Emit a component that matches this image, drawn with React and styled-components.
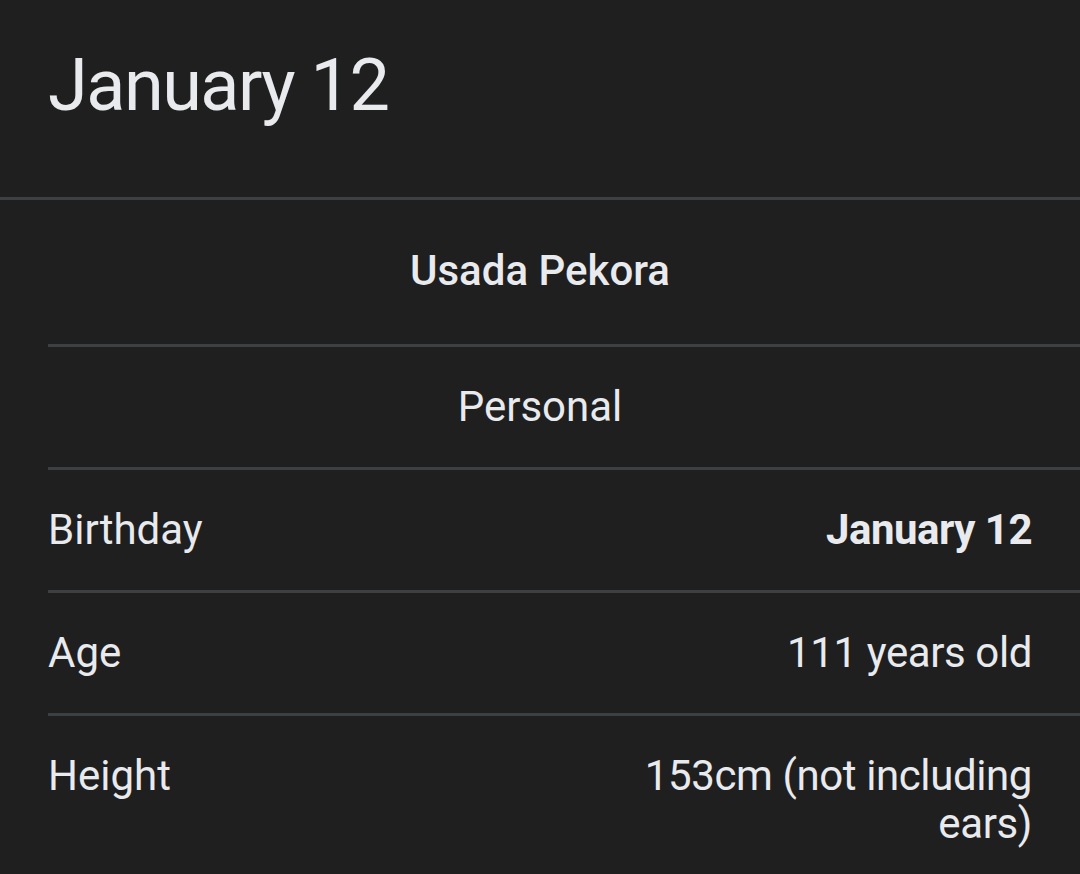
import styled, { createGlobalStyle } from "styled-components";

const GlobalStyle = createGlobalStyle`
  html, body {
    margin: 0;
    padding: 0;
    background: #1f1f1f;
  }
  * {
    box-sizing: border-box;
  }
`;

const rows = [
  { label: "Birthday", value: "January 12", strong: true },
  { label: "Age", value: "111 years old" },
  { label: "Height", value: "153cm (not including ears)" },
];

export default function App() {
  return (
    <>
      <GlobalStyle />
      <Page>
        <Header>
          <Title>January 12</Title>
        </Header>
        <InfoList>
          <SectionRow $heading>Usada Pekora</SectionRow>
          <SectionRow>Personal</SectionRow>
          {rows.map((r) => (
            <InfoRow key={r.label}>
              <Label>{r.label}</Label>
              <Value $strong={r.strong}>{r.value}</Value>
            </InfoRow>
          ))}
        </InfoList>
      </Page>
    </>
  );
}

const Page = styled.div`
  width: 1080px;
  min-height: 874px;
  background: #1f1f1f;
  color: #e8eaed;
  font-family: Roboto, "Noto Sans", Arial, sans-serif;
  overflow: hidden;
`;

const Header = styled.header`
  height: 200px;
  padding: 43px 48px 0;
  border-bottom: 3px solid #3c4043;
`;

const Title = styled.h1`
  margin: 0;
  font-size: 72px;
  font-weight: 400;
  letter-spacing: -1.5px;
  line-height: normal;
  color: #e8eaed;
`;

const InfoList = styled.div`
  margin-left: 48px;
`;

const SectionRow = styled.div`
  padding: ${(p) => (p.$heading ? "47px 48px 49px 0" : "36px 48px 36px 0")};
  border-bottom: 3px solid #3c4043;
  text-align: center;
  font-size: 42px;
  line-height: 48px;
  font-weight: ${(p) => (p.$heading ? 500 : 400)};
`;

const InfoRow = styled.div`
  display: flex;
  justify-content: space-between;
  align-items: flex-start;
  padding: 36px 48px 36px 0;
  border-bottom: 3px solid #3c4043;
  font-size: 42px;
  line-height: 48px;
`;

const Label = styled.div`
  flex: 0 0 auto;
`;

const Value = styled.div`
  max-width: 440px;
  text-align: right;
  font-weight: ${(p) => (p.$strong ? 700 : 400)};
  letter-spacing: ${(p) => (p.$strong ? "-0.5px" : "-0.4px")};
`;
